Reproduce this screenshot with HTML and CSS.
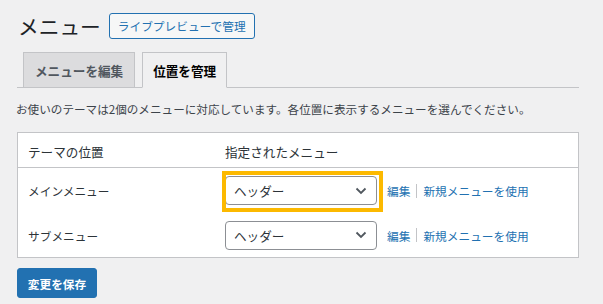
FILE: index.html
```html
<!DOCTYPE html>
<html lang="ja">
<head>
<meta charset="utf-8">
<title>メニュー</title>
<link rel="stylesheet" href="styles.css">
</head>
<body>
<div class="wrap">
  <div class="head">
    <h1 class="title">メニュー</h1>
    <a class="btn-outline">ライブプレビューで管理</a>
  </div>
  <nav class="tabs">
    <a class="tab">メニューを編集</a>
    <a class="tab tab-active">位置を管理</a>
  </nav>
  <p class="desc">お使いのテーマは2個のメニューに対応しています。各位置に表示するメニューを選んでください。</p>
  <div class="table">
    <div class="row row-head">
      <div class="cell">テーマの位置</div>
      <div class="cell">指定されたメニュー</div>
    </div>
    <div class="row">
      <div class="cell">メインメニュー</div>
      <div class="cell cell-ctrl">
        <div class="select-wrap">
          <div class="select"><span>ヘッダー</span><svg class="chev" width="12" height="8" viewBox="0 0 12 8"><polyline points="1.5,1.5 6,6 10.5,1.5" fill="none" stroke="#50575e" stroke-width="1.8"/></svg></div>
          <div class="highlight"></div>
        </div>
        <a class="link">編集</a><span class="sep"></span><a class="link">新規メニューを使用</a>
      </div>
    </div>
    <div class="row">
      <div class="cell">サブメニュー</div>
      <div class="cell cell-ctrl">
        <div class="select-wrap">
          <div class="select"><span>ヘッダー</span><svg class="chev" width="12" height="8" viewBox="0 0 12 8"><polyline points="1.5,1.5 6,6 10.5,1.5" fill="none" stroke="#50575e" stroke-width="1.8"/></svg></div>
        </div>
        <a class="link">編集</a><span class="sep"></span><a class="link">新規メニューを使用</a>
      </div>
    </div>
  </div>
  <button class="btn-primary">変更を保存</button>
</div>
</body>
</html>
```
FILE: styles.css
```css
html, body {
  margin: 0;
  padding: 0;
}
body {
  background: #f0f0f1;
  font-family: "Noto Sans CJK JP", "Noto Sans", sans-serif;
  color: #3c434a;
  width: 603px;
  height: 304px;
  overflow: hidden;
}
.wrap {
  padding: 0 24px 0 17px;
}
.head {
  display: flex;
  align-items: center;
  padding-top: 13px;
  height: 26px;
}
.title {
  margin: 0 8px 0 1px;
  font-size: 20.7px;
  font-weight: 400;
  line-height: 26px;
  color: #1d2327;
}
.btn-outline {
  box-sizing: border-box;
  height: 26px;
  padding: 0 8px;
  border: 1px solid #2271b1;
  border-radius: 3px;
  background: #f6f7f7;
  color: #2271b1;
  font-size: 11.7px;
  line-height: 24px;
  display: flex;
  align-items: center;
}
.tabs {
  display: flex;
  align-items: flex-end;
  gap: 7px;
  margin-top: 13px;
  padding-left: 6px;
  border-bottom: 1px solid #c3c4c7;
  height: 35px;
}
.tab {
  box-sizing: border-box;
  height: 36px;
  margin-bottom: -1px;
  padding: 0 11px;
  display: flex;
  align-items: center;
  border: 1px solid #c3c4c7;
  background: #dcdcde;
  color: #50575e;
  font-size: 12.6px;
  font-weight: 700;
}
.tab-active {
  background: #f0f0f1;
  border-bottom-color: #f0f0f1;
  color: #000;
  padding: 0 10px;
}
.desc {
  margin: 12px 0 0 -1px;
  font-size: 11.6px;
  line-height: 18px;
  color: #3c434a;
}
.table {
  margin-top: 14px;
  border: 1px solid #c3c4c7;
  background: #fff;
}
.row {
  display: grid;
  grid-template-columns: 197px 1fr;
  height: 45px;
  align-items: center;
}
.row-head {
  height: 34px;
  border-bottom: 1px solid #c3c4c7;
  font-size: 12.6px;
  color: #2c3338;
}
.row-head .cell {
  padding-top: 2px;
}
.cell {
  padding: 0 10px;
  font-size: inherit;
}
.row:not(.row-head) .cell:first-child {
  font-size: 11.7px;
  color: #2c3338;
}
.row:last-child {
  height: 44px;
}
.cell-ctrl {
  display: flex;
  align-items: center;
}
.select-wrap {
  position: relative;
}
.select {
  box-sizing: border-box;
  width: 152px;
  height: 29px;
  border: 1px solid #8c8f94;
  border-radius: 4px;
  background: #fff;
  display: flex;
  align-items: center;
  justify-content: space-between;
  padding: 0 9px 0 8px;
  font-size: 12.6px;
  color: #2c3338;
}
.chev {
  display: block;
}
.highlight {
  position: absolute;
  left: -3px;
  top: -5px;
  width: 161px;
  height: 41px;
  box-sizing: border-box;
  border: 4px solid #fcb900;
}
.link {
  color: #2271b1;
  font-size: 11.7px;
}
.select-wrap + .link {
  margin-left: 10px;
}
.sep {
  display: inline-block;
  width: 0;
  height: 14px;
  border-left: 1px solid #c3c4c7;
  margin: 0 6px;
}
.btn-primary {
  display: block;
  margin-top: 10px;
  box-sizing: border-box;
  width: 80px;
  height: 30px;
  border: 1px solid #2271b1;
  border-radius: 3px;
  background: #2271b1;
  color: #fff;
  font-family: "Noto Sans CJK JP", "Noto Sans", sans-serif;
  font-size: 11.7px;
  font-weight: 700;
  padding: 0;
}
```
